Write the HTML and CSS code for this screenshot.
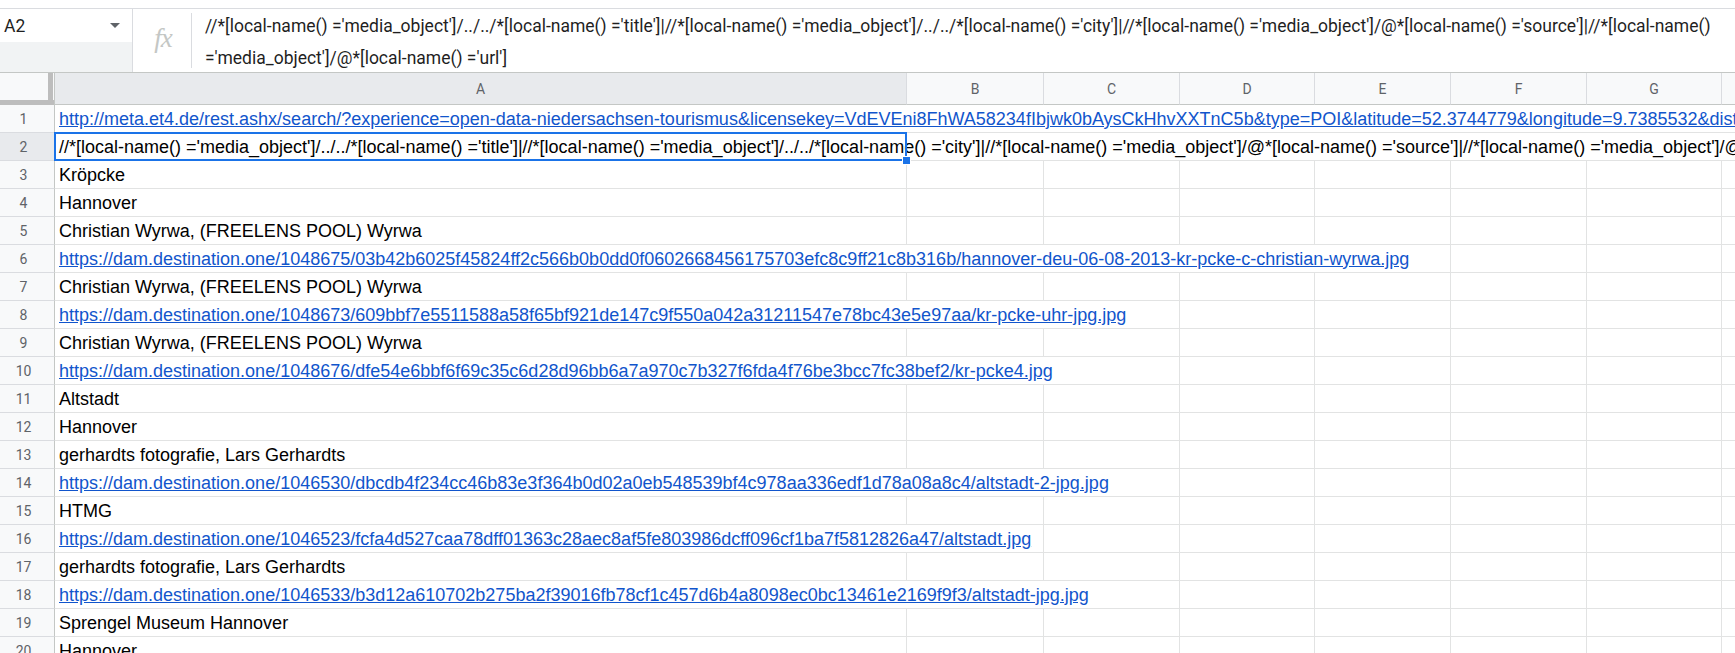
FILE: index.html
```html
<!DOCTYPE html>
<html>
<head>
<meta charset="utf-8">
<link rel="stylesheet" href="styles.css">
</head>
<body>
<div class="app">
  <div class="topgap"></div>
  <div class="fbar">
    <div class="namebox">
      <div class="namebox-input">
        <span class="nb-text">A2</span>
        <svg class="nb-arrow" width="10" height="5" viewBox="0 0 10 5"><path d="M0 0h10L5 5z" fill="#5f6368"/></svg>
      </div>
      <div class="namebox-fill"></div>
    </div>
    <div class="fx"><span class="fx-glyph">fx</span></div>
    <div class="fdiv"></div>
    <div class="ftext">//*[local-name() ='media_object']/../../*[local-name() ='title']|//*[local-name() ='media_object']/../../*[local-name() ='city']|//*[local-name() ='media_object']/@*[local-name() ='source']|//*[local-name() ='media_object']/@*[local-name() ='url']</div>
  </div>

  <div class="sheet">
    <div class="row head">
      <div class="corner"></div>
      <div class="ch active">A</div>
      <div class="ch">B</div>
      <div class="ch">C</div>
      <div class="ch">D</div>
      <div class="ch">E</div>
      <div class="ch">F</div>
      <div class="ch">G</div>
      <div class="ch"></div>
    </div>

    <div class="row">
      <div class="rh">1</div>
      <div class="c span-all"><span class="link">http://meta.et4.de/rest.ashx/search/?experience=open-data-niedersachsen-tourismus&amp;licensekey=VdEVEni8FhWA58234fIbjwk0bAysCkHhvXXTnC5b&amp;type=POI&amp;latitude=52.3744779&amp;longitude=9.7385532&amp;distance=1&amp;limit=20&amp;template=ET2014A.xml</span></div>
    </div>

    <div class="row">
      <div class="rh active">2</div>
      <div class="c span-all">//*[local-name() ='media_object']/../../*[local-name() ='title']|//*[local-name() ='media_object']/../../*[local-name() ='city']|//*[local-name() ='media_object']/@*[local-name() ='source']|//*[local-name() ='media_object']/@*[local-name() ='url']</div>
      <div class="sel"></div>
    </div>

    <div class="row"><div class="rh">3</div><div class="c">Kröpcke</div><div class="c"></div><div class="c"></div><div class="c"></div><div class="c"></div><div class="c"></div><div class="c"></div><div class="c"></div></div>
    <div class="row"><div class="rh">4</div><div class="c">Hannover</div><div class="c"></div><div class="c"></div><div class="c"></div><div class="c"></div><div class="c"></div><div class="c"></div><div class="c"></div></div>
    <div class="row"><div class="rh">5</div><div class="c">Christian Wyrwa, (FREELENS POOL) Wyrwa</div><div class="c"></div><div class="c"></div><div class="c"></div><div class="c"></div><div class="c"></div><div class="c"></div><div class="c"></div></div>
    <div class="row"><div class="rh">6</div><div class="c span5"><span class="link">https://dam.destination.one/1048675/03b42b6025f45824ff2c566b0b0dd0f0602668456175703efc8c9ff21c8b316b/hannover-deu-06-08-2013-kr-pcke-c-christian-wyrwa.jpg</span></div><div class="c"></div><div class="c"></div><div class="c"></div></div>
    <div class="row"><div class="rh">7</div><div class="c">Christian Wyrwa, (FREELENS POOL) Wyrwa</div><div class="c"></div><div class="c"></div><div class="c"></div><div class="c"></div><div class="c"></div><div class="c"></div><div class="c"></div></div>
    <div class="row"><div class="rh">8</div><div class="c span3"><span class="link">https://dam.destination.one/1048673/609bbf7e5511588a58f65bf921de147c9f550a042a31211547e78bc43e5e97aa/kr-pcke-uhr-jpg.jpg</span></div><div class="c"></div><div class="c"></div><div class="c"></div><div class="c"></div><div class="c"></div></div>
    <div class="row"><div class="rh">9</div><div class="c">Christian Wyrwa, (FREELENS POOL) Wyrwa</div><div class="c"></div><div class="c"></div><div class="c"></div><div class="c"></div><div class="c"></div><div class="c"></div><div class="c"></div></div>
    <div class="row"><div class="rh">10</div><div class="c span3"><span class="link">https://dam.destination.one/1048676/dfe54e6bbf6f69c35c6d28d96bb6a7a970c7b327f6fda4f76be3bcc7fc38bef2/kr-pcke4.jpg</span></div><div class="c"></div><div class="c"></div><div class="c"></div><div class="c"></div><div class="c"></div></div>
    <div class="row"><div class="rh">11</div><div class="c">Altstadt</div><div class="c"></div><div class="c"></div><div class="c"></div><div class="c"></div><div class="c"></div><div class="c"></div><div class="c"></div></div>
    <div class="row"><div class="rh">12</div><div class="c">Hannover</div><div class="c"></div><div class="c"></div><div class="c"></div><div class="c"></div><div class="c"></div><div class="c"></div><div class="c"></div></div>
    <div class="row"><div class="rh">13</div><div class="c">gerhardts fotografie, Lars Gerhardts</div><div class="c"></div><div class="c"></div><div class="c"></div><div class="c"></div><div class="c"></div><div class="c"></div><div class="c"></div></div>
    <div class="row"><div class="rh">14</div><div class="c span3"><span class="link">https://dam.destination.one/1046530/dbcdb4f234cc46b83e3f364b0d02a0eb548539bf4c978aa336edf1d78a08a8c4/altstadt-2-jpg.jpg</span></div><div class="c"></div><div class="c"></div><div class="c"></div><div class="c"></div><div class="c"></div></div>
    <div class="row"><div class="rh">15</div><div class="c">HTMG</div><div class="c"></div><div class="c"></div><div class="c"></div><div class="c"></div><div class="c"></div><div class="c"></div><div class="c"></div></div>
    <div class="row"><div class="rh">16</div><div class="c span2"><span class="link">https://dam.destination.one/1046523/fcfa4d527caa78dff01363c28aec8af5fe803986dcff096cf1ba7f5812826a47/altstadt.jpg</span></div><div class="c"></div><div class="c"></div><div class="c"></div><div class="c"></div><div class="c"></div><div class="c"></div></div>
    <div class="row"><div class="rh">17</div><div class="c">gerhardts fotografie, Lars Gerhardts</div><div class="c"></div><div class="c"></div><div class="c"></div><div class="c"></div><div class="c"></div><div class="c"></div><div class="c"></div></div>
    <div class="row"><div class="rh">18</div><div class="c span3"><span class="link">https://dam.destination.one/1046533/b3d12a610702b275ba2f39016fb78cf1c457d6b4a8098ec0bc13461e2169f9f3/altstadt-jpg.jpg</span></div><div class="c"></div><div class="c"></div><div class="c"></div><div class="c"></div><div class="c"></div></div>
    <div class="row"><div class="rh">19</div><div class="c">Sprengel Museum Hannover</div><div class="c"></div><div class="c"></div><div class="c"></div><div class="c"></div><div class="c"></div><div class="c"></div><div class="c"></div></div>
    <div class="row"><div class="rh">20</div><div class="c">Hannover</div><div class="c"></div><div class="c"></div><div class="c"></div><div class="c"></div><div class="c"></div><div class="c"></div><div class="c"></div></div>
  </div>
</div>
</body>
</html>
```

FILE: styles.css
```css
html, body {
  margin: 0;
  padding: 0;
  background: #fff;
}
body {
  width: 1735px;
  height: 653px;
  overflow: hidden;
  font-family: "Liberation Sans", Arial, sans-serif;
}
.app {
  display: flex;
  flex-direction: column;
  width: 1735px;
}
.topgap {
  height: 8px;
  border-bottom: 1px solid #dadce0;
}
.fbar {
  display: flex;
  height: 63px;
  border-bottom: 1px solid #c4c7c5;
  background: #fff;
}
.namebox {
  width: 132px;
  border-right: 1px solid #dadce0;
  display: flex;
  flex-direction: column;
  flex: none;
}
.namebox-input {
  height: 33px;
  display: flex;
  align-items: center;
  justify-content: space-between;
  padding: 0 12px 0 4px;
  background: #fff;
}
.nb-text {
  font-family: Roboto, "Liberation Sans", sans-serif;
  font-size: 17.5px;
  color: #1f1f1f;
}
.nb-arrow {
  margin-top: -1px;
}
.namebox-fill {
  flex: 1;
  background: #f1f3f4;
}
.fx {
  width: 58px;
  flex: none;
  display: flex;
  align-items: center;
  justify-content: center;
}
.fx-glyph {
  font-family: "Liberation Serif", "DejaVu Serif", serif;
  font-style: italic;
  font-size: 27px;
  color: #c4c7c5;
  letter-spacing: -1px;
  margin-left: 2px;
  margin-top: -4px;
}
.fdiv {
  width: 1px;
  flex: none;
  background: #dadce0;
  margin: 4px 0 4px 0;
}
.ftext {
  flex: 1;
  padding: 1px 20px 0 13px;
  font-family: Roboto, "Liberation Sans", sans-serif;
  font-size: 17.5px;
  line-height: 32px;
  color: #1f1f1f;
  overflow: hidden;
}

.sheet {
  display: flex;
  flex-direction: column;
}
.row {
  display: grid;
  grid-template-columns: 55px 852px 137px 136px 135px 136px 136px 135px 120px;
  grid-template-rows: 28px;
  height: 28px;
}
.row.head {
  height: 32px;
  grid-template-rows: 32px;
}
.corner {
  box-sizing: border-box;
  background:
    linear-gradient(to right, transparent 48px, #bdbdbd 48px, #bdbdbd 53px, transparent 53px),
    linear-gradient(to bottom, transparent 27px, #bdbdbd 27px);
  background-color: #f8f9fa;
  border-right: 1px solid #c4c7c5;
}
.ch {
  box-sizing: border-box;
  background: #f8f9fa;
  border-right: 1px solid #dadce0;
  border-bottom: 1px solid #c4c7c5;
  display: flex;
  align-items: center;
  justify-content: center;
  font-family: Roboto, "Liberation Sans", sans-serif;
  font-size: 14px;
  color: #5f6368;
  padding-top: 1px;
}
.ch.active {
  background: #e8eaed;
}
.rh {
  box-sizing: border-box;
  background: #f8f9fa;
  border-right: 1px solid #c4c7c5;
  border-bottom: 1px solid #dadce0;
  display: flex;
  align-items: center;
  justify-content: center;
  padding-right: 7px;
  font-family: Roboto, "Liberation Sans", sans-serif;
  font-size: 14px;
  color: #5f6368;
}
.rh.active {
  background: #e8eaed;
}
.c {
  box-sizing: border-box;
  border-right: 1px solid #e2e3e3;
  border-bottom: 1px solid #e2e3e3;
  display: flex;
  align-items: flex-end;
  padding: 0 0 2px 4px;
  font-size: 18px;
  color: #000;
  white-space: nowrap;
  overflow: hidden;
  min-width: 0;
}
.span-all { grid-row: 1; grid-column: 2 / -1; border-right: none; }
.span5 { grid-column: span 5; }
.span3 { grid-column: span 3; }
.span2 { grid-column: span 2; }
.link {
  color: #1155cc;
  text-decoration: underline;
}
.sel {
  grid-row: 1;
  grid-column: 2;
  position: relative;
  margin: -1px 0 0 -1px;
  border: 2px solid #1a73e8;
  z-index: 2;
  pointer-events: none;
}
.sel::after {
  content: "";
  position: absolute;
  right: -6px;
  bottom: -6px;
  width: 7px;
  height: 7px;
  background: #1a73e8;
  border: 1px solid #fff;
}
```
